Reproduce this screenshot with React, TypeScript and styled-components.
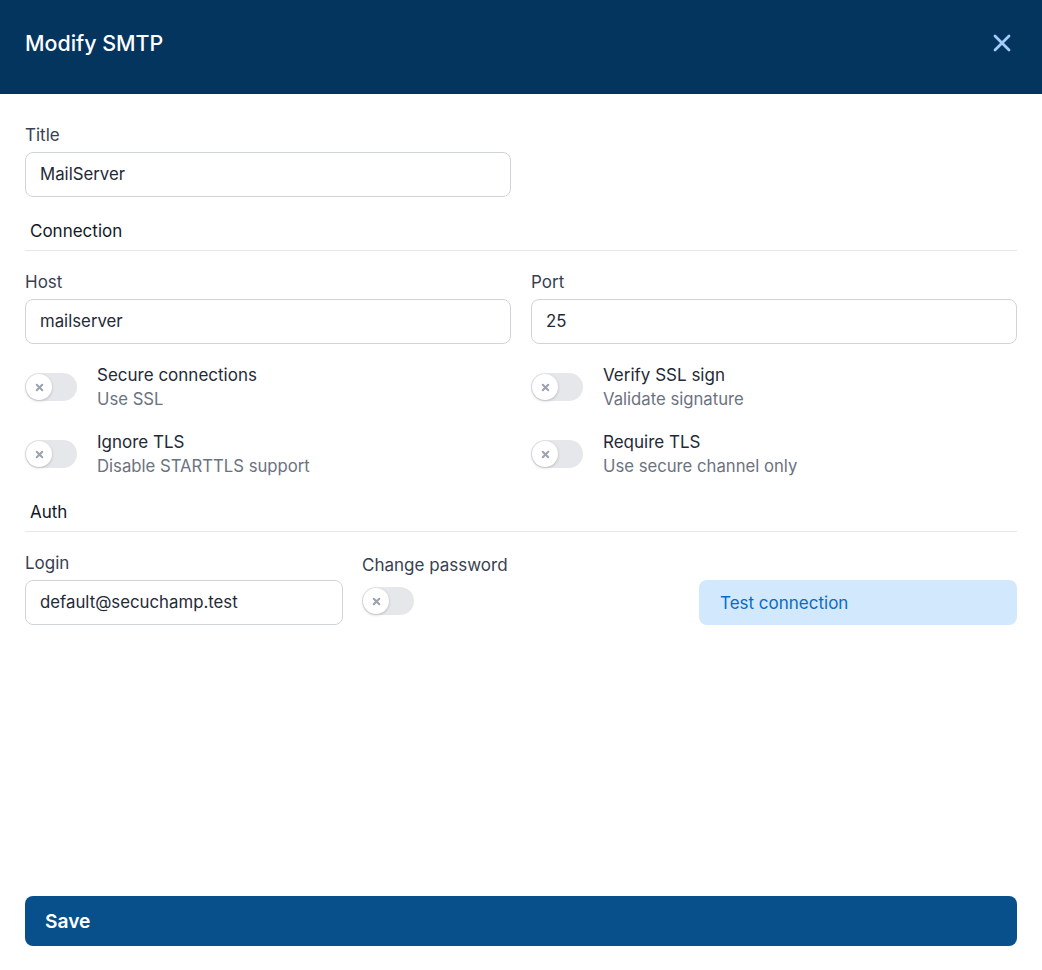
import styled, { createGlobalStyle } from "styled-components";
import { X } from "lucide-react";

const GlobalStyle = createGlobalStyle`
  * {
    box-sizing: border-box;
  }

  html,
  body {
    margin: 0;
    background: #fff;
    font-family: Inter, "Noto Sans", sans-serif;
  }
`;

const Modal = styled.div`
  width: 1042px;
  height: 970px;
  display: flex;
  flex-direction: column;
  background: #fff;
`;

const Header = styled.header`
  height: 94px;
  flex-shrink: 0;
  display: flex;
  align-items: center;
  justify-content: space-between;
  padding: 0 26px 8px 25px;
  background: #03355f;
`;

const HeaderTitle = styled.h1`
  margin: 0;
  font-size: 21.4px;
  line-height: 28px;
  font-weight: 500;
  color: #fff;
`;

const CloseButton = styled.button`
  display: flex;
  padding: 0;
  border: none;
  background: transparent;
  color: #a4cafe;
`;

const Body = styled.div`
  flex: 1;
  display: flex;
  flex-direction: column;
  padding: 30px 25px 24px;
`;

const TwoColumns = styled.div`
  display: grid;
  grid-template-columns: 486px 486px;
  column-gap: 20px;
`;

const Label = styled.label`
  display: block;
  font-size: 17px;
  line-height: 22px;
  color: #374151;
  margin-bottom: ${(p: { $gap?: number }) => p.$gap ?? 6}px;
`;

const Input = styled.input`
  display: block;
  width: 100%;
  height: 45px;
  padding: 0 14px 2px;
  border: 1px solid #d1d5db;
  border-radius: 8px;
  background: #fff;
  font-family: inherit;
  font-size: 16.8px;
  color: #1f2937;
  outline: none;
`;

const Section = styled.div`
  border-bottom: 1px solid #e5e7eb;
  padding: 0 5px 7px;
  font-size: 17px;
  line-height: 24px;
  color: #111827;
  margin-top: 22px;
  margin-bottom: 20px;
`;

const Toggles = styled(TwoColumns)`
  margin-top: 19px;
  row-gap: 19px;
`;

const ToggleRow = styled.div`
  display: flex;
  align-items: center;
  gap: 20px;
`;

const Track = styled.span`
  position: relative;
  display: block;
  flex-shrink: 0;
  width: 52px;
  height: 28px;
  border-radius: 14px;
  background: #e5e7eb;
`;

const Knob = styled.span`
  position: absolute;
  top: 1px;
  left: 1px;
  width: 26px;
  height: 26px;
  display: flex;
  align-items: center;
  justify-content: center;
  border-radius: 50%;
  background: #fff;
  color: #9ca3af;
  box-shadow: 0 1px 3px rgba(0, 0, 0, 0.2);
`;

const ToggleText = styled.div`
  font-size: 17px;
  line-height: 24px;
`;

const ToggleTitle = styled.div`
  color: #1f2937;
`;

const ToggleHint = styled.div`
  color: #6b7280;
  font-size: 16.7px;
`;

const AuthRow = styled.div`
  display: flex;
  align-items: flex-end;
`;

const LoginField = styled.div`
  width: 318px;
  margin-right: 19px;
`;

const PasswordField = styled.div`
  width: 337px;
  align-self: flex-start;
  padding-top: 2px;
`;

const TestButton = styled.button`
  width: 318px;
  height: 45px;
  padding: 0 21px;
  border: none;
  border-radius: 8px;
  background: #d1e8fd;
  color: #0b6bc0;
  font-family: inherit;
  font-size: 17px;
  text-align: left;
`;

const SaveButton = styled.button`
  margin-top: auto;
  width: 100%;
  height: 50px;
  padding: 0 20px;
  border: none;
  border-radius: 8px;
  background: #08508c;
  color: #fff;
  font-family: inherit;
  font-size: 19.2px;
  font-weight: 600;
  text-align: left;
`;

const Toggle = () => (
  <Track>
    <Knob>
      <X size={11} strokeWidth={4.5} />
    </Knob>
  </Track>
);

const toggles = [
  { title: "Secure connections", hint: "Use SSL" },
  { title: "Verify SSL sign", hint: "Validate signature" },
  { title: "Ignore TLS", hint: "Disable STARTTLS support" },
  { title: "Require TLS", hint: "Use secure channel only" },
];

const App = () => (
  <Modal>
    <GlobalStyle />
    <Header>
      <HeaderTitle>Modify SMTP</HeaderTitle>
      <CloseButton>
        <X size={28} strokeWidth={2.4} />
      </CloseButton>
    </Header>
    <Body>
      <TwoColumns>
        <div>
          <Label>Title</Label>
          <Input defaultValue="MailServer" />
        </div>
      </TwoColumns>
      <Section>Connection</Section>
      <TwoColumns>
        <div>
          <Label>Host</Label>
          <Input defaultValue="mailserver" />
        </div>
        <div>
          <Label>Port</Label>
          <Input defaultValue="25" />
        </div>
      </TwoColumns>
      <Toggles>
        {toggles.map((t) => (
          <ToggleRow key={t.title}>
            <Toggle />
            <ToggleText>
              <ToggleTitle>{t.title}</ToggleTitle>
              <ToggleHint>{t.hint}</ToggleHint>
            </ToggleText>
          </ToggleRow>
        ))}
      </Toggles>
      <Section>Auth</Section>
      <AuthRow>
        <LoginField>
          <Label>Login</Label>
          <Input defaultValue="default@secuchamp.test" />
        </LoginField>
        <PasswordField>
          <Label $gap={11}>Change password</Label>
          <Toggle />
        </PasswordField>
        <TestButton>Test connection</TestButton>
      </AuthRow>
      <SaveButton>Save</SaveButton>
    </Body>
  </Modal>
);

export default App;
